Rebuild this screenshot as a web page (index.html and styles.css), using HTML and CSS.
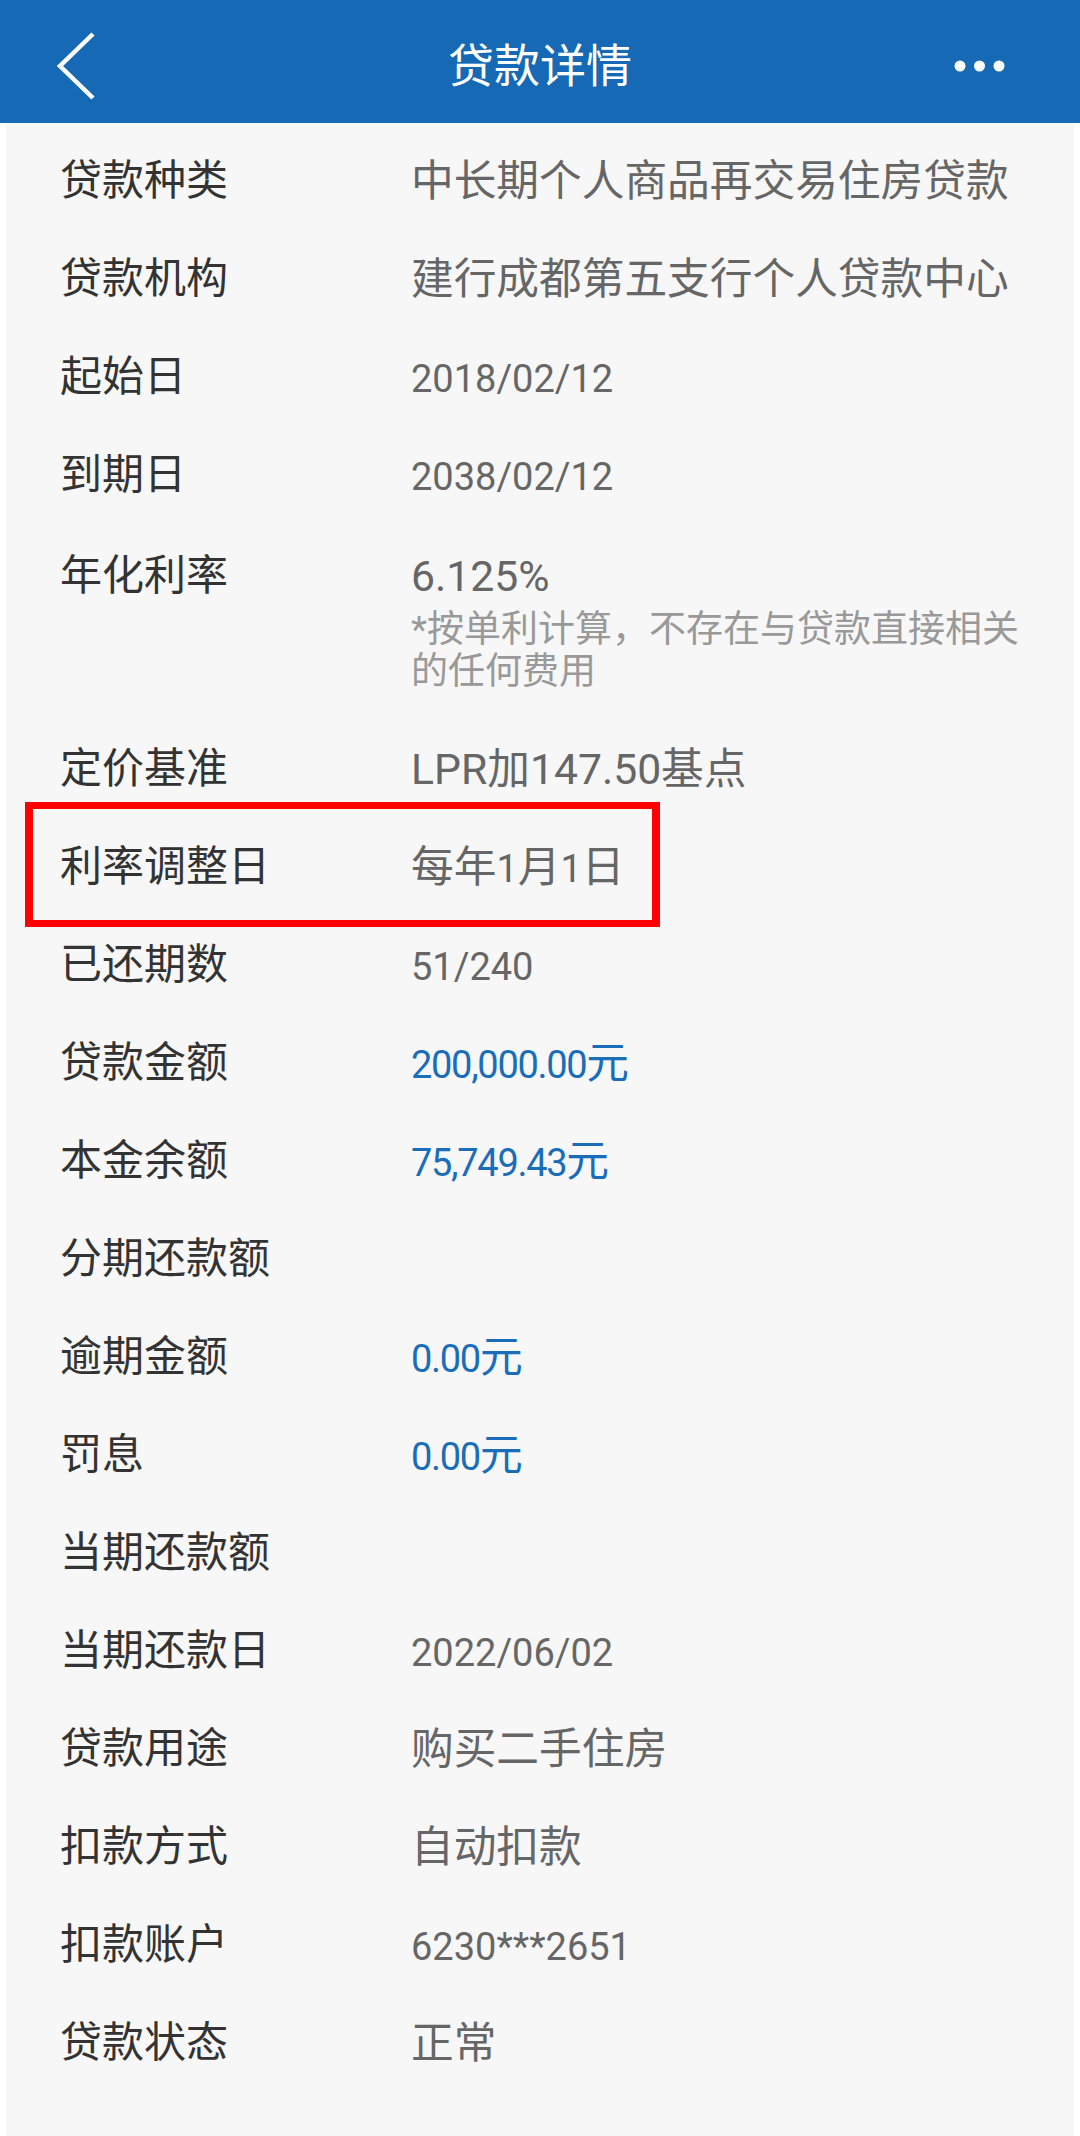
FILE: index.html
```html
<!DOCTYPE html>
<html lang="zh-CN">
<head>
	<meta charset="UTF-8">
	<meta name="viewport" content="width=device-width, initial-scale=1.0">
	<title>贷款详情</title>
	<link rel="stylesheet" href="styles.css">
</head>
<body>
	<!-- 顶部导航 -->
	<div class="header">
		<div class="back">
			<svg width="40" height="70" viewBox="0 0 40 70">
				<polyline points="37,3 4,35 37,67" fill="none" stroke="#fff" stroke-width="4.5" stroke-linejoin="miter"/>
			</svg>
		</div>
		<div class="title">贷款详情</div>
		<div class="more">
			<svg width="60" height="14" viewBox="0 0 60 14">
				<circle cx="6" cy="7" r="5.5" fill="#fff"/>
				<circle cx="25.5" cy="7" r="5.5" fill="#fff"/>
				<circle cx="45" cy="7" r="5.5" fill="#fff"/>
			</svg>
		</div>
	</div>

	<!-- 详情列表 -->
	<div class="list">
		<div class="row">
			<div class="label">贷款种类</div>
			<div class="value">中长期个人商品再交易住房贷款</div>
		</div>
		<div class="row">
			<div class="label">贷款机构</div>
			<div class="value">建行成都第五支行个人贷款中心</div>
		</div>
		<div class="row">
			<div class="label">起始日</div>
			<div class="value"><span class="num">2018/02/12</span></div>
		</div>
		<div class="row">
			<div class="label">到期日</div>
			<div class="value"><span class="num">2038/02/12</span></div>
		</div>
		<div class="row row_tall">
			<div class="label">年化利率</div>
			<div class="value">
				6.125%
				<div class="note">*按单利计算，不存在与贷款直接相关的任何费用</div>
			</div>
		</div>
		<div class="row">
			<div class="label">定价基准</div>
			<div class="value">LPR加147.50基点</div>
		</div>
		<div class="row row_marked">
			<div class="label">利率调整日</div>
			<div class="value">每年<span class="num">1</span>月<span class="num">1</span>日</div>
			<!-- 红色标注框 -->
			<div class="mark"></div>
		</div>
		<div class="row">
			<div class="label">已还期数</div>
			<div class="value"><span class="num">51/240</span></div>
		</div>
		<div class="row">
			<div class="label">贷款金额</div>
			<div class="value blue"><span class="num amt">200,000.00</span>元</div>
		</div>
		<div class="row">
			<div class="label">本金余额</div>
			<div class="value blue"><span class="num amt">75,749.43</span>元</div>
		</div>
		<div class="row">
			<div class="label">分期还款额</div>
			<div class="value"></div>
		</div>
		<div class="row">
			<div class="label">逾期金额</div>
			<div class="value blue"><span class="num amt">0.00</span>元</div>
		</div>
		<div class="row">
			<div class="label">罚息</div>
			<div class="value blue"><span class="num amt">0.00</span>元</div>
		</div>
		<div class="row">
			<div class="label">当期还款额</div>
			<div class="value"></div>
		</div>
		<div class="row">
			<div class="label">当期还款日</div>
			<div class="value"><span class="num">2022/06/02</span></div>
		</div>
		<div class="row">
			<div class="label">贷款用途</div>
			<div class="value">购买二手住房</div>
		</div>
		<div class="row">
			<div class="label">扣款方式</div>
			<div class="value">自动扣款</div>
		</div>
		<div class="row">
			<div class="label">扣款账户</div>
			<div class="value"><span class="num">6230***2651</span></div>
		</div>
		<div class="row">
			<div class="label">贷款状态</div>
			<div class="value">正常</div>
		</div>
	</div>
</body>
</html>
```

FILE: styles.css
```css
* {
	padding: 0;
	margin: 0;
	box-sizing: border-box;
}
body {
	width: 1080px;
	min-height: 2136px;
	background-color: #fff;
	font-family: Roboto, "Noto Sans CJK SC", sans-serif;
}
/*顶部导航*/
.header {
	height: 123px;
	padding-top: 8px;
	background-color: #1569b5;
	display: grid;
	grid-template-columns: 1fr auto 1fr;
	align-items: center;
}
.back {
	padding-left: 56px;
	display: flex;
}
.title {
	color: #fff;
	font-size: 46px;
	line-height: 60px;
}
.more {
	justify-self: end;
	padding-right: 66px;
	display: flex;
}
/*列表*/
.list {
	margin: 0 6px;
	min-height: 2013px;
	padding-top: 6px;
	background-color: #f7f7f7;
}
.row {
	height: 98px;
	display: flex;
	align-items: flex-start;
	padding: 29px 44px 0 54px;
	font-size: 42px;
	line-height: 46px;
}
.row_tall {
	height: 196px;
	padding-top: 32px;
}
.row_marked {
	position: relative;
}
.label {
	width: 351px;
	flex-shrink: 0;
	color: #333;
	white-space: nowrap;
}
.value {
	flex: 1;
	color: #666;
	font-size: 42.7px;
}
.value.blue {
	color: #1a6db8;
}
.num {
	font-size: 38px;
}
/*金额数字较窄*/
.amt {
	letter-spacing: -1.3px;
}
.note {
	margin-top: 10px;
	font-size: 37px;
	line-height: 42px;
	color: #999;
}
/*红色标注框*/
.mark {
	position: absolute;
	left: 19px;
	top: -13px;
	width: 635px;
	height: 125px;
	border-style: solid;
	border-color: #ff0000;
	border-width: 7px 8px;
}
```
